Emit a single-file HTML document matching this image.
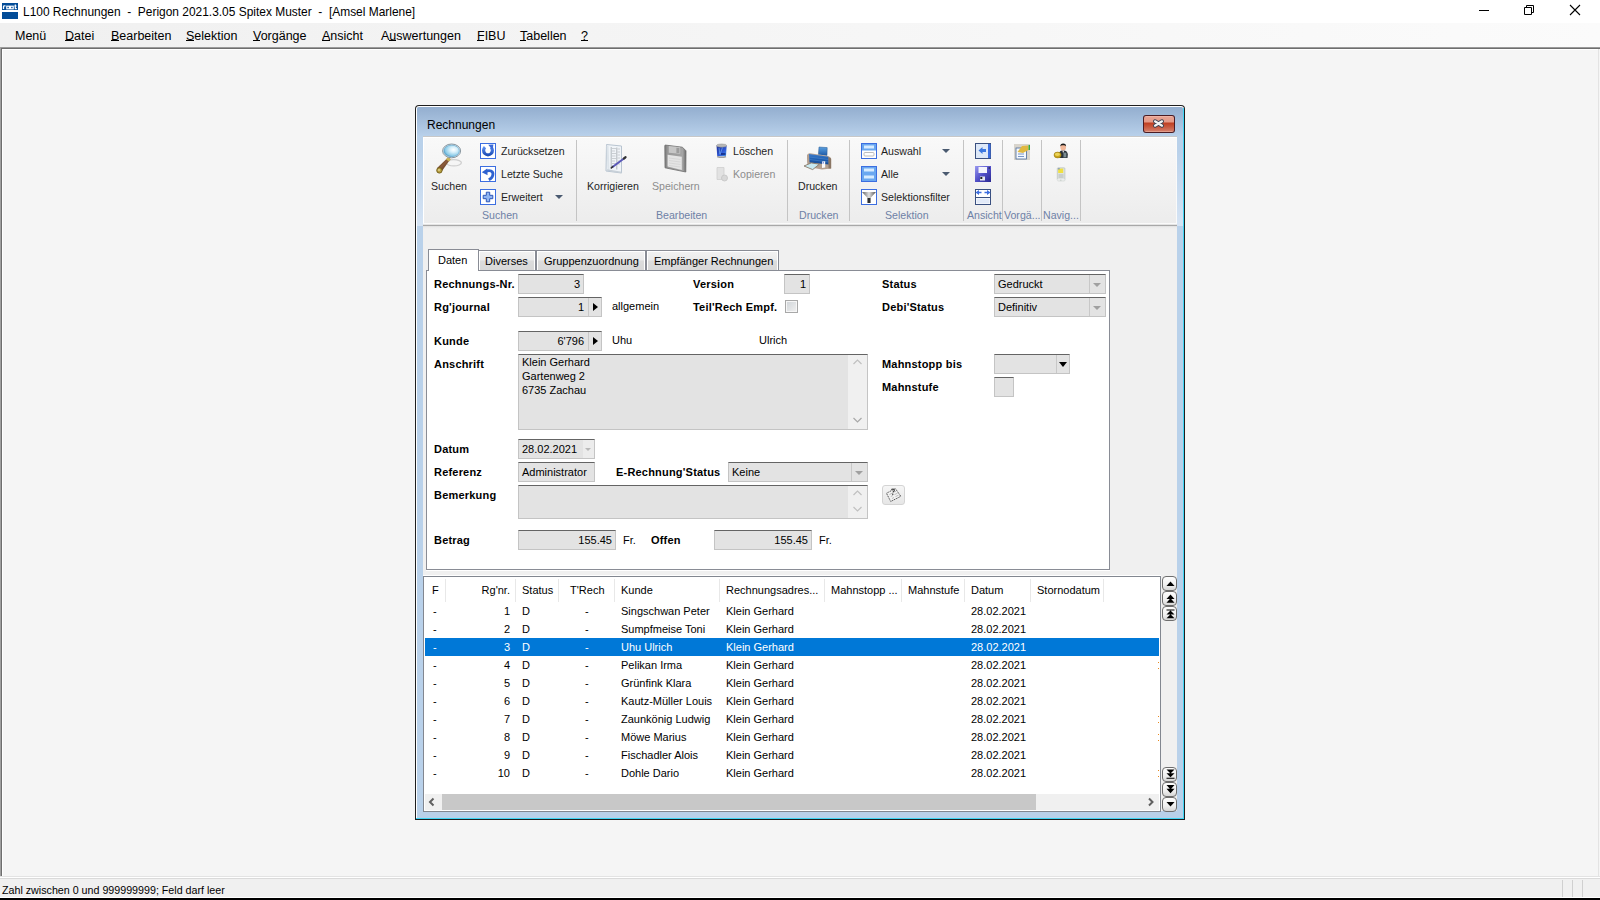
<!DOCTYPE html>
<html><head><meta charset="utf-8">
<style>
*{margin:0;padding:0;box-sizing:border-box}
html,body{width:1600px;height:900px;overflow:hidden;background:#f5f5f5;font-family:"Liberation Sans",sans-serif;color:#000}
.a{position:absolute}
.t{position:absolute;white-space:pre;font-size:11px;line-height:12px}
.m{position:absolute;white-space:pre;font-size:12.5px;line-height:14px}
.b{font-weight:bold}
u{text-decoration:none;border-bottom:1px solid #000}
.inp{position:absolute;background:#e1e1e1;border:1px solid #a9a9a9;border-top-color:#646464}
.sel{background:#0078d7;color:#fff}
</style></head><body>
<!-- title bar -->
<div class="a" style="left:0;top:0;width:1600px;height:23px;background:#fff"></div>
<svg class="a" style="left:0;top:0" width="22" height="22" viewBox="0 0 22 22"><rect x="2" y="3" width="16" height="7" fill="#034c98"/><rect x="2" y="12" width="16" height="7" fill="#034c98"/>
<path d="M3.5 9 V6.5 Q3.5 5.8 4.5 5.8 H5.5" fill="none" stroke="#fff" stroke-width="1.3"/><rect x="6.8" y="6.2" width="2.6" height="2.6" fill="none" stroke="#fff" stroke-width="1.2"/><rect x="10.6" y="6.2" width="2.6" height="2.6" fill="none" stroke="#fff" stroke-width="1.2"/><path d="M15.3 4.6 V8.6 H16.8 M14.3 6 H16.6" fill="none" stroke="#fff" stroke-width="1.2"/></svg>
<div class="a" style="left:1479px;top:10px;width:10px;height:1px;background:#000"></div>
<svg class="a" style="left:1520px;top:0" width="20" height="20" viewBox="0 0 20 20"><path d="M4.5 7.5 H11.5 V14.5 H4.5 Z" fill="none" stroke="#000" stroke-width="1"/><path d="M6.5 7 V5.5 H13.5 V12.5 H12" fill="none" stroke="#000" stroke-width="1"/></svg>
<svg class="a" style="left:1565px;top:0" width="20" height="20" viewBox="0 0 20 20"><path d="M5 5 L15 15 M15 5 L5 15" stroke="#000" stroke-width="1.1"/></svg>
<div class="m" style="left:23px;top:5px;font-size:11.95px">L100 Rechnungen  -  Perigon 2021.3.05 Spitex Muster  -  [Amsel Marlene]</div>
<!-- menu bar -->
<div class="a" style="left:0;top:23px;width:1600px;height:24px;background:linear-gradient(to right,#f0f0f0,#fbfbfb)"></div>
<div class="m" style="left:15px;top:29px">Menü</div>
<div class="m" style="left:65px;top:29px">Datei</div>
<div class="m" style="left:111px;top:29px">Bearbeiten</div>
<div class="m" style="left:186px;top:29px">Selektion</div>
<div class="m" style="left:253px;top:29px">Vorgänge</div>
<div class="m" style="left:322px;top:29px">Ansicht</div>
<div class="m" style="left:381px;top:29px">Auswertungen</div>
<div class="m" style="left:477px;top:29px">FIBU</div>
<div class="m" style="left:520px;top:29px">Tabellen</div>
<div class="m" style="left:581px;top:29px">?</div>
<div class="a" style="left:65px;top:40px;width:9px;height:1px;background:#000"></div>
<div class="a" style="left:111px;top:40px;width:8px;height:1px;background:#000"></div>
<div class="a" style="left:186px;top:40px;width:8px;height:1px;background:#000"></div>
<div class="a" style="left:253px;top:40px;width:7px;height:1px;background:#000"></div>
<div class="a" style="left:322px;top:40px;width:8px;height:1px;background:#000"></div>
<div class="a" style="left:389px;top:40px;width:7px;height:1px;background:#000"></div>
<div class="a" style="left:477px;top:40px;width:7px;height:1px;background:#000"></div>
<div class="a" style="left:520px;top:40px;width:6px;height:1px;background:#000"></div>
<div class="a" style="left:581px;top:40px;width:7px;height:1px;background:#000"></div>
<!-- MDI frame -->
<div class="a" style="left:0;top:47px;width:1600px;height:1px;background:#9a9a9a"></div>
<div class="a" style="left:1px;top:48px;width:1599px;height:1px;background:#6e6e6e"></div>
<div class="a" style="left:0;top:47px;width:1px;height:830px;background:#a0a0a0"></div>
<div class="a" style="left:1px;top:48px;width:1px;height:828px;background:#6e6e6e"></div>
<div class="a" style="left:2px;top:49px;width:1596px;height:1px;background:#fff"></div>
<div class="a" style="left:2px;top:49px;width:1px;height:827px;background:#fff"></div>
<div class="a" style="left:1598px;top:49px;width:1px;height:828px;background:#e3e3e3"></div>
<div class="a" style="left:0;top:876px;width:1600px;height:1px;background:#e3e3e3"></div>
<div class="a" style="left:0;top:877px;width:1600px;height:1px;background:#fff"></div>
<!-- status bar -->
<div class="a" style="left:0;top:878px;width:1600px;height:19px;background:#f0f0f0;border-top:1px solid #dadada"></div>
<div class="a" style="left:0;top:897px;width:1600px;height:1px;background:#fff"></div>
<div class="a" style="left:0;top:898px;width:1600px;height:2px;background:#000"></div>
<div class="t" style="left:2px;top:884px;font-size:10.7px">Zahl zwischen 0 und 999999999; Feld darf leer</div>
<div class="a" style="left:1562px;top:880px;width:1px;height:17px;background:#d0d0d0"></div>
<div class="a" style="left:1572px;top:880px;width:1px;height:17px;background:#d0d0d0"></div>
<div class="a" style="left:1582px;top:880px;width:1px;height:17px;background:#d0d0d0"></div>


<!-- DIALOG -->
<div class="a" style="left:415px;top:105px;width:770px;height:715px;background:#1e1e1e;border-radius:4px 4px 0 0"></div>
<div class="a" style="left:416px;top:106px;width:768px;height:713px;background:#fff;border-radius:3px 3px 0 0"></div>
<div class="a" style="left:417px;top:107px;width:766px;height:711px;background:#b9d1ea;border-radius:2px 2px 0 0"></div>
<div class="a" style="left:1183px;top:108px;width:1px;height:711px;background:#3fd5f5"></div>
<div class="a" style="left:416px;top:818px;width:768px;height:1px;background:#3fd5f5"></div>
<div class="a" style="left:417px;top:107px;width:766px;height:29px;background:linear-gradient(#93aecf,#b8d0ea);border-radius:2px 2px 0 0"></div>
<div class="m" style="left:427px;top:118px;font-size:12px">Rechnungen</div>
<!-- close btn -->
<div class="a" style="left:1143px;top:115px;width:32px;height:18px;background:#4a1c24;border-radius:3px"></div>
<div class="a" style="left:1144px;top:116px;width:30px;height:16px;border-radius:2px;background:linear-gradient(#f6c4b8 0,#e8a292 1px,#e49a88 6px,#bf3f22 7px,#c85a40 11px,#d47a66 15px,#f0c0b0 16px)"></div>
<svg class="a" style="left:1152px;top:118px" width="13" height="11" viewBox="0 0 13 11"><path d="M3 3.3 L10 7.7 M10 3.3 L3 7.7" stroke="#3a4252" stroke-width="4" stroke-linecap="round"/><path d="M3 3.3 L10 7.7 M10 3.3 L3 7.7" stroke="#f4f4f4" stroke-width="2.2" stroke-linecap="round"/></svg>
<!-- ribbon -->
<div class="a" style="left:423px;top:136px;width:754px;height:1px;background:#c8c8c8"></div>
<div class="a" style="left:423px;top:137px;width:754px;height:88px;background:linear-gradient(#f9f9f9,#ececec)"></div>
<div class="a" style="left:423px;top:137px;width:1px;height:87px;background:#fff"></div>
<div class="a" style="left:1176px;top:137px;width:1px;height:87px;background:#fafafa"></div>
<div class="a" style="left:423px;top:137px;width:754px;height:1px;background:#fff"></div>
<div class="a" style="left:423px;top:223px;width:754px;height:1px;background:#fafafa"></div>
<div class="a" style="left:423px;top:224px;width:754px;height:1px;background:#e4e4e4"></div>
<div class="a" style="left:423px;top:225px;width:754px;height:1px;background:#a8a8a8"></div>
<div class="a" style="left:417px;top:150px;width:6px;height:76px;background:linear-gradient(#b9d1ea,#d6e4f4)"></div>
<div class="a" style="left:1177px;top:150px;width:6px;height:76px;background:linear-gradient(#b9d1ea,#d6e4f4)"></div>
<div class="a" style="left:423px;top:226px;width:754px;height:585px;background:linear-gradient(#dcdcdc 0,#ebebeb 1px,#f0f0f0 3px,#f0f0f0)"></div>

<style>
.r{position:absolute;white-space:pre;font-size:10.6px;line-height:12px;color:#1e1e1e}
.g{position:absolute;white-space:pre;font-size:10.6px;line-height:12px;color:#6e81a6}
.gr{color:#8d8d8d}
.sep{position:absolute;top:140px;width:1px;height:81px;background:#c4c4c4}
.ib{position:absolute;width:16px;height:16px;border:1px solid #3c6ee0;background:#fff}
.dd{position:absolute;width:0;height:0;border-left:4px solid transparent;border-right:4px solid transparent;border-top:4px solid #4a5a70}
</style>
<!-- Suchen group -->
<svg class="a" style="left:430px;top:140px" width="40" height="40" viewBox="0 0 40 40">
<defs><radialGradient id="lens" cx="0.62" cy="0.4" r="0.65"><stop offset="0" stop-color="#ffffff"/><stop offset="0.35" stop-color="#d8f0fa"/><stop offset="0.8" stop-color="#8ccbe8"/><stop offset="1" stop-color="#4f9ec8"/></radialGradient>
<linearGradient id="hdl" x1="0" y1="0" x2="1" y2="1"><stop offset="0" stop-color="#3a2010"/><stop offset="0.5" stop-color="#8a5a3a"/><stop offset="1" stop-color="#3a2010"/></linearGradient></defs>
<ellipse cx="23.8" cy="22.8" rx="7.6" ry="3.1" fill="none" stroke="#cfcfcf" stroke-width="1.3"/>
<path d="M18 17.5 L20.5 19 L12 31 L6.8 28.2 Z" fill="url(#hdl)"/>
<path d="M17.6 17.2 L20.8 19.2 L19.2 21.5 L16 19.6 Z" fill="#c9b45a"/>
<circle cx="9.4" cy="30.4" r="2.7" fill="#b8a040" stroke="#6e5a18" stroke-width="0.9"/>
<circle cx="9" cy="30" r="1" fill="#e0d090"/>
<ellipse cx="21.6" cy="10.9" rx="9" ry="6.9" fill="#e8ecee" stroke="#7a8a94" stroke-width="0.9"/>
<ellipse cx="21.6" cy="10.9" rx="7.8" ry="5.8" fill="url(#lens)" stroke="#5aa0c8" stroke-width="0.6"/>
</svg>
<div class="r" style="left:431px;top:180px">Suchen</div>
<div class="ib" style="left:480px;top:143px"></div>
<svg class="a" style="left:480px;top:143px" width="16" height="16" viewBox="0 0 16 16"><defs><linearGradient id="rf" x1="0" y1="0" x2="0" y2="1"><stop offset="0" stop-color="#5a8ef0"/><stop offset="1" stop-color="#1f4fb8"/></linearGradient></defs><path d="M5 4.2 A4.4 4.4 0 1 0 11 4.2" fill="none" stroke="url(#rf)" stroke-width="3.2"/><path d="M8.2 1.8 L13.4 1.6 L12.6 7 Z" fill="#3a6ad8"/></svg>
<div class="r" style="left:501px;top:145px">Zurücksetzen</div>
<div class="ib" style="left:480px;top:166px"></div>
<svg class="a" style="left:480px;top:166px" width="16" height="16" viewBox="0 0 16 16"><path d="M5.5 5.8 C9.5 3.2 13.8 5.2 12.8 9.2 C12.3 11.5 10.8 12.8 8.8 13.8" fill="none" stroke="#2f62d0" stroke-width="2.8"/><path d="M1.8 6.2 L7.2 2.5 L7.6 9.2 Z" fill="#2f62d0"/></svg>
<div class="r" style="left:501px;top:168px">Letzte Suche</div>
<div class="ib" style="left:480px;top:189px"></div>
<svg class="a" style="left:480px;top:189px" width="16" height="16" viewBox="0 0 16 16"><path d="M6.3 3.2 H9.7 V6.3 H12.8 V9.7 H9.7 V12.8 H6.3 V9.7 H3.2 V6.3 H6.3 Z" fill="#8fb4f2" stroke="#2d55b8" stroke-width="1"/></svg>
<div class="r" style="left:501px;top:191px">Erweitert</div>
<div class="dd" style="left:555px;top:195px"></div>
<div class="g" style="left:482px;top:209px">Suchen</div>
<div class="sep" style="left:576px"></div>
<!-- Bearbeiten group -->
<svg class="a" style="left:604px;top:142px" width="24" height="34" viewBox="0 0 24 34">
<path d="M2.5 2.5 L17.5 4 L17.5 31 L2 29 Z" fill="#f0f4f8" stroke="#b8c4d0" stroke-width="1"/>
<path d="M3.5 3.5 L4.5 28.5" stroke="#dde4ea" stroke-width="2"/><path d="M7.2 5 V27 M12.8 5.5 V27.5" stroke="#9aa0a6" stroke-width="0.7"/><path d="M8 6.5 H12 M8 9 H11 M8 11.5 H12 M8 14 H11.5 M8 16.5 H12 M8 19 H11 M8 21.5 H12 M8 24 H11 M13.5 7 H16 M13.5 10 H16 M13.5 13 H16 M13.5 16 H16 M13.5 19 H16 M13.5 22 H16" stroke="#c0c4c8" stroke-width="0.8"/><path d="M3 28 L17.5 30.5" stroke="#c8d0d8" stroke-width="1.5"/>
<path d="M8.5 25 L21 15.8" stroke="#5a58b8" stroke-width="2" stroke-linecap="round"/>
<path d="M19.8 16.6 L21.6 15.2" stroke="#333" stroke-width="2.2" stroke-linecap="round"/><path d="M7.3 25.8 L8.8 24.7" stroke="#333" stroke-width="1.6" stroke-linecap="round"/>
</svg>
<div class="r" style="left:587px;top:180px">Korrigieren</div>
<svg class="a" style="left:660px;top:140px" width="32" height="36" viewBox="0 0 32 36">
<defs><linearGradient id="fg" x1="0" y1="0" x2="1" y2="0"><stop offset="0" stop-color="#7a7a7a"/><stop offset="0.15" stop-color="#9a9a9a"/><stop offset="0.85" stop-color="#a4a4a4"/><stop offset="1" stop-color="#6a6a6a"/></linearGradient></defs>
<path d="M4.8 5.6 Q4.8 5 5.6 5.1 L22.4 7.2 L26 10.8 L25.8 32 L5 27.8 Z" fill="url(#fg)" stroke="#6e6e6e" stroke-width="0.8"/>
<path d="M8.8 6 L20.2 7.2 L20.2 13.8 L8.8 12.8 Z" fill="#c6c6c6"/>
<path d="M16.4 7.8 H19.4 V13 H16.4 Z" fill="#9c9c9c"/>
<path d="M7.6 14.8 L21.8 16.8 L21.8 30 L7.6 26.4 Z" fill="#e4e4e4"/>
<path d="M9 18 L20.5 19.5 M9 20.5 L20.5 22 M9 23 L20.5 24.5 M9 25.5 L20.5 27" stroke="#d0d0d0" stroke-width="0.7"/>
</svg>
<div class="r gr" style="left:652px;top:180px">Speichern</div>
<svg class="a" style="left:715px;top:143px" width="14" height="16" viewBox="0 0 14 16">
<defs><linearGradient id="tb" x1="0" y1="0" x2="1" y2="1"><stop offset="0" stop-color="#1c2e98"/><stop offset="0.6" stop-color="#2f5ad8"/><stop offset="1" stop-color="#4a9ae8"/></linearGradient></defs>
<path d="M1.6 3 L11.6 3 L11 13.2 L2.2 13.2 Z" fill="url(#tb)"/>
<path d="M4 5 L4.8 11 M7.5 4.5 L5 11.5" stroke="#7ab4f0" stroke-width="0.8" opacity="0.8"/>
<path d="M6 11 H10.5" stroke="#0a1a70" stroke-width="1.3"/>
<ellipse cx="6.6" cy="2.6" rx="5.2" ry="1.6" fill="#b8b8b8" stroke="#888" stroke-width="0.5"/>
<path d="M2.2 13.4 Q6.6 15.2 11 13.4" fill="none" stroke="#a0a0a0" stroke-width="1.6"/>
</svg>
<div class="r" style="left:733px;top:145px">Löschen</div>
<svg class="a" style="left:715px;top:166px" width="14" height="16" viewBox="0 0 14 16">
<path d="M2 1.5 H9 V13.5 H2 Z" fill="#e2e2e2" stroke="#cfcfcf" stroke-width="0.8"/>
<circle cx="9.5" cy="12" r="3" fill="#d8d8d8" stroke="#c4c4c4" stroke-width="0.8"/>
</svg>
<div class="r gr" style="left:733px;top:168px">Kopieren</div>
<div class="g" style="left:656px;top:209px">Bearbeiten</div>
<div class="sep" style="left:787px"></div>
<!-- Drucken -->
<svg class="a" style="left:798px;top:138px" width="42" height="40" viewBox="0 0 42 40">
<defs><linearGradient id="pb" x1="0" y1="0" x2="0" y2="1"><stop offset="0" stop-color="#5aa0e0"/><stop offset="1" stop-color="#1e5aa8"/></linearGradient>
<linearGradient id="pbody" x1="0" y1="0" x2="0" y2="1"><stop offset="0" stop-color="#3c7ccc"/><stop offset="0.5" stop-color="#1f5eb0"/><stop offset="1" stop-color="#174a90"/></linearGradient></defs>
<path d="M21 9 L29.2 9.6 L29 17.5 L20.4 16.6 Z" fill="url(#pb)" stroke="#2a5a90" stroke-width="0.5"/>
<path d="M9 17 Q10 15 12 15.2 L30 18 Q33 18.8 33.3 21 L33.3 30.5 L24 31.5 L10 29 Q8.8 26 9 17 Z" fill="#b4a090"/>
<path d="M11 16 L30.5 18.8 L30.8 26.5 L11.5 24.5 Z" fill="url(#pbody)"/>
<path d="M11.5 19 L30.5 21.5 M11.5 21.5 L30.5 24" stroke="#4a88d0" stroke-width="0.7" opacity="0.8"/>
<path d="M24 23.5 L27.2 23.2 L27.2 29.5 L24 30 Z" fill="#fafafa"/>
<path d="M24.5 25 L26 24.8" stroke="#3050d0" stroke-width="0.9"/>
<path d="M30.5 19 L33 20.5 L33 30.5 L30.5 30.5 Z" fill="#8a7664"/>
<path d="M6 28 L13.3 24.9 L21.3 26.2 L14.7 31.6 Z" fill="#c8eaf2" stroke="#8a7a6a" stroke-width="0.9"/>
</svg>
<div class="r" style="left:798px;top:180px">Drucken</div>
<div class="g" style="left:799px;top:209px">Drucken</div>
<div class="sep" style="left:849px"></div>
<!-- Selektion -->
<div class="ib" style="left:861px;top:143px"></div>
<svg class="a" style="left:861px;top:143px" width="16" height="16" viewBox="0 0 16 16"><rect x="1" y="1" width="14" height="6.5" fill="#6aa8f0"/><rect x="3" y="2.5" width="10" height="3" fill="#d8ecff"/><rect x="3" y="9.5" width="10" height="3.5" rx="1" fill="none" stroke="#bdbdbd" stroke-width="1"/></svg>
<div class="r" style="left:881px;top:145px">Auswahl</div>
<div class="dd" style="left:942px;top:149px"></div>
<div class="ib" style="left:861px;top:166px"></div>
<svg class="a" style="left:861px;top:166px" width="16" height="16" viewBox="0 0 16 16"><rect x="1" y="1" width="14" height="14" fill="#6aa8f0"/><rect x="3" y="2.5" width="10" height="3" fill="#d8ecff"/><rect x="3" y="9.5" width="10" height="3" fill="#d8ecff"/></svg>
<div class="r" style="left:881px;top:168px">Alle</div>
<div class="dd" style="left:942px;top:172px"></div>
<div class="ib" style="left:861px;top:189px"></div>
<svg class="a" style="left:861px;top:189px" width="16" height="16" viewBox="0 0 16 16"><defs><linearGradient id="fun" x1="0" y1="0" x2="1" y2="0"><stop offset="0" stop-color="#606060"/><stop offset="0.5" stop-color="#e0e0e0"/><stop offset="1" stop-color="#505050"/></linearGradient></defs><path d="M1 3 H15 L9.5 9 V14 H6.5 V9 Z" fill="url(#fun)"/><path d="M6.5 9 V14 H9.5 V9" fill="#303030"/></svg>
<div class="r" style="left:881px;top:191px">Selektionsfilter</div>
<div class="g" style="left:885px;top:209px">Selektion</div>
<div class="sep" style="left:963px"></div>
<!-- Ansicht -->
<svg class="a" style="left:975px;top:143px" width="16" height="16" viewBox="0 0 16 16"><rect x="0.5" y="0.5" width="15" height="15" fill="#dde8f8" stroke="#3a5080" stroke-width="1"/><rect x="13" y="1" width="2.5" height="14" fill="#3c6ee0"/><path d="M3.5 7.5 L7.5 4 V6 H11 V9 H7.5 V11 Z" fill="#3c78e0"/></svg>
<svg class="a" style="left:975px;top:166px" width="16" height="16" viewBox="0 0 16 16"><defs><linearGradient id="fl" x1="0" y1="0" x2="1" y2="1"><stop offset="0" stop-color="#9a9af0"/><stop offset="0.5" stop-color="#5250c8"/><stop offset="1" stop-color="#2a2890"/></linearGradient></defs><rect x="0" y="0" width="16" height="16" fill="url(#fl)"/><rect x="3.5" y="1" width="8.5" height="6" fill="#f4f4fc"/><rect x="5" y="10.5" width="5" height="4" fill="#e8e8f0"/><rect x="5.3" y="11" width="2" height="2" fill="#222"/><rect x="13.5" y="1.5" width="1.5" height="1" fill="#222"/></svg>
<svg class="a" style="left:975px;top:189px" width="16" height="16" viewBox="0 0 16 16"><rect x="0.5" y="0.5" width="15" height="15" fill="#fff" stroke="#3a5080" stroke-width="1"/><path d="M0.5 8.5 H15.5" stroke="#3a5080"/><path d="M0.5 3.5 L4 1 V6 Z M15.5 3.5 L12 1 V6 Z" fill="#3c6ee0"/><path d="M3 3.5 H6.5 M9.5 3.5 H13" stroke="#3c6ee0" stroke-width="1.5"/><rect x="1.5" y="9.5" width="13" height="5" fill="#e2eaf8"/></svg>
<div class="g" style="left:967px;top:209px">Ansicht</div>
<div class="sep" style="left:1002px"></div>
<!-- Vorgae -->
<svg class="a" style="left:1014px;top:144px" width="16" height="16" viewBox="0 0 16 16"><rect x="0" y="0" width="16" height="16" fill="#d8d4cc"/><rect x="2" y="4" width="10.5" height="11" fill="#f4f8ff" stroke="#4a6a9a" stroke-width="0.8"/><path d="M4 10 H10 M4 12.5 H10" stroke="#6a8ac0" stroke-width="0.9"/><path d="M3.5 8 L8 2 L14 1.5 L14.5 6 L9 9 Z" fill="#e0b840"/><rect x="14.5" y="1" width="1.5" height="5" fill="#3aaa3a"/></svg>
<div class="g" style="left:1004px;top:209px">Vorgä...</div>
<div class="sep" style="left:1041px"></div>
<!-- Navig -->
<svg class="a" style="left:1052px;top:142px" width="18" height="18" viewBox="0 0 18 18">
<path d="M7 12 Q7.5 8.5 10 8.5 L12.5 8.5 Q15.5 9 15.8 12.5 L15.5 16 H7.5 Z" fill="#2a3038"/>
<path d="M10.5 9 L11.3 12 L12 9 Z" fill="#e8e8e8"/>
<rect x="11.3" y="10.5" width="3.2" height="5" rx="0.6" fill="#7a8a90" stroke="#3a4a50" stroke-width="0.5"/>
<ellipse cx="11.2" cy="5.2" rx="2.8" ry="3.2" fill="#f2b89a"/>
<path d="M8.3 4.6 Q8.2 1.6 11.2 1.6 Q14.2 1.6 14.1 4.6 Q13.5 3 11.2 3.2 Q9 3 8.3 4.6 Z" fill="#1a1a1a"/>
<ellipse cx="5.6" cy="13" rx="3.6" ry="2.9" fill="#c8a418" stroke="#8a6a08" stroke-width="0.5"/>
<ellipse cx="5.4" cy="12.3" rx="2.6" ry="1.6" fill="#ecd45a"/>
</svg>
<svg class="a" style="left:1056px;top:167px" width="10" height="15" viewBox="0 0 10 15">
<rect x="1.3" y="0.8" width="7.6" height="13" rx="0.8" fill="#dfe3e0" stroke="#b0b8b4" stroke-width="0.6"/>
<rect x="2.2" y="1.6" width="5" height="4.4" fill="#f0e040"/>
<rect x="2.2" y="1.4" width="1.4" height="0.9" fill="#3a6ad0"/>
<path d="M2.5 8 H7.5 M2.5 10 H7.5" stroke="#a8b0ac" stroke-width="0.8"/>
<path d="M1 13 H4 M5.5 13 H8.8" stroke="#f8f8f8" stroke-width="1.2"/>
</svg>
<div class="g" style="left:1043px;top:209px">Navig...</div>
<div class="sep" style="left:1080px"></div>


<style>
.f{position:absolute;white-space:pre;font-size:11px;line-height:12px;color:#000}
.fb{position:absolute;white-space:pre;font-size:11px;line-height:12px;font-weight:bold;letter-spacing:0.2px;color:#000}
.in{position:absolute;background:#e3e3e3;border:1px solid #c4c4c4;border-top-color:#646464}
.vs{position:absolute;width:1px;background:#c8c8c8}
.tri{position:absolute;width:0;height:0;border-top:4px solid transparent;border-bottom:4px solid transparent;border-left:5px solid #000}
.ddg{position:absolute;width:0;height:0;border-left:4px solid transparent;border-right:4px solid transparent;border-top:4px solid #a0a0a0}
.tab{position:absolute;top:250px;height:21px;border:1px solid #898c95;border-bottom:none;background:linear-gradient(#f2f2f2 0,#ebebeb 9px,#dcdcdc 10px,#d8d8d8 20px);box-shadow:inset 1px 1px 0 #fff,inset -1px 0 0 #fff}
</style>
<!-- tabs -->
<div class="tab" style="left:478px;width:58px"></div>
<div class="tab" style="left:536px;width:110px"></div>
<div class="tab" style="left:646px;width:133px"></div>
<div class="a" style="left:426px;top:270px;width:684px;height:300px;background:#fff;border:1px solid #898c95"></div>
<div class="a" style="left:428px;top:249px;width:51px;height:22px;background:#fff;border:1px solid #898c95;border-bottom:none"></div>
<div class="f" style="left:438px;top:254px">Daten</div>
<div class="f" style="left:485px;top:255px">Diverses</div>
<div class="f" style="left:544px;top:255px">Gruppenzuordnung</div>
<div class="f" style="left:654px;top:255px">Empfänger Rechnungen</div>
<!-- row 1 -->
<div class="fb" style="left:434px;top:278px">Rechnungs-Nr.</div>
<div class="in" style="left:518px;top:274px;width:66px;height:20px"></div>
<div class="f" style="left:518px;top:278px;width:62px;text-align:right">3</div>
<div class="fb" style="left:693px;top:278px">Version</div>
<div class="in" style="left:784px;top:274px;width:26px;height:20px"></div>
<div class="f" style="left:784px;top:278px;width:22px;text-align:right">1</div>
<div class="fb" style="left:882px;top:278px">Status</div>
<div class="in" style="left:994px;top:274px;width:112px;height:20px"></div>
<div class="vs" style="left:1089px;top:275px;height:18px"></div>
<div class="ddg" style="left:1093px;top:283px"></div>
<div class="f" style="left:998px;top:278px">Gedruckt</div>
<!-- row 2 -->
<div class="fb" style="left:434px;top:301px">Rg'journal</div>
<div class="in" style="left:518px;top:297px;width:84px;height:20px"></div>
<div class="vs" style="left:588px;top:298px;height:18px"></div>
<div class="tri" style="left:593px;top:303px"></div>
<div class="f" style="left:518px;top:301px;width:66px;text-align:right">1</div>
<div class="f" style="left:612px;top:300px">allgemein</div>
<div class="fb" style="left:693px;top:301px">Teil'Rech Empf.</div>
<div class="a" style="left:785px;top:300px;width:13px;height:13px;border:1px solid #a8a8a8;background:#f6f6f6"></div><div class="a" style="left:787px;top:302px;width:9px;height:9px;background:linear-gradient(135deg,#d2d6da,#eeeeee)"></div>
<div class="fb" style="left:882px;top:301px">Debi'Status</div>
<div class="in" style="left:994px;top:297px;width:112px;height:20px"></div>
<div class="vs" style="left:1089px;top:298px;height:18px"></div>
<div class="ddg" style="left:1093px;top:306px"></div>
<div class="f" style="left:998px;top:301px">Definitiv</div>
<!-- row 3 -->
<div class="fb" style="left:434px;top:335px">Kunde</div>
<div class="in" style="left:518px;top:331px;width:84px;height:20px"></div>
<div class="vs" style="left:588px;top:332px;height:18px"></div>
<div class="tri" style="left:593px;top:337px"></div>
<div class="f" style="left:518px;top:335px;width:66px;text-align:right">6'796</div>
<div class="f" style="left:612px;top:334px">Uhu</div>
<div class="f" style="left:759px;top:334px">Ulrich</div>
<!-- row 4 -->
<div class="fb" style="left:434px;top:358px">Anschrift</div>
<div class="in" style="left:518px;top:354px;width:350px;height:76px"></div>
<div class="a" style="left:848px;top:355px;width:19px;height:74px;background:#f0f0f0"></div>
<svg class="a" style="left:852px;top:358px" width="11" height="8" viewBox="0 0 11 8"><path d="M1.5 6 L5.5 2 L9.5 6" fill="none" stroke="#c0c0c0" stroke-width="1.2"/></svg>
<svg class="a" style="left:852px;top:416px" width="11" height="8" viewBox="0 0 11 8"><path d="M1.5 2 L5.5 6 L9.5 2" fill="none" stroke="#a8a8a8" stroke-width="1.2"/></svg>
<div class="f" style="left:522px;top:356px">Klein Gerhard</div>
<div class="f" style="left:522px;top:370px">Gartenweg 2</div>
<div class="f" style="left:522px;top:384px">6735 Zachau</div>
<div class="fb" style="left:882px;top:358px">Mahnstopp bis</div>
<div class="in" style="left:994px;top:354px;width:76px;height:20px"></div>
<div class="vs" style="left:1056px;top:355px;height:18px"></div>
<div class="a" style="left:1059px;top:362px;width:0;height:0;border-left:4px solid transparent;border-right:4px solid transparent;border-top:5px solid #000"></div>
<div class="fb" style="left:882px;top:381px">Mahnstufe</div>
<div class="in" style="left:994px;top:377px;width:20px;height:20px"></div>
<!-- row 5 -->
<div class="fb" style="left:434px;top:443px">Datum</div>
<div class="in" style="left:518px;top:439px;width:77px;height:20px"></div>
<div class="a" style="left:583px;top:440px;width:11px;height:18px;background:#ececec"></div>
<div class="ddg" style="left:585px;top:448px;border-top-color:#b8b8b8;border-left-width:3.5px;border-right-width:3.5px;border-top-width:3.5px"></div>
<div class="f" style="left:522px;top:443px">28.02.2021</div>
<!-- row 6 -->
<div class="fb" style="left:434px;top:466px">Referenz</div>
<div class="in" style="left:518px;top:462px;width:77px;height:20px"></div>
<div class="f" style="left:522px;top:466px">Administrator</div>
<div class="fb" style="left:616px;top:466px">E-Rechnung'Status</div>
<div class="in" style="left:728px;top:462px;width:140px;height:20px"></div>
<div class="vs" style="left:851px;top:463px;height:18px"></div>
<div class="ddg" style="left:855px;top:471px"></div>
<div class="f" style="left:732px;top:466px">Keine</div>
<!-- row 7 -->
<div class="fb" style="left:434px;top:489px">Bemerkung</div>
<div class="in" style="left:518px;top:485px;width:350px;height:34px"></div>
<div class="a" style="left:848px;top:486px;width:19px;height:32px;background:#f0f0f0"></div>
<svg class="a" style="left:852px;top:489px" width="11" height="8" viewBox="0 0 11 8"><path d="M1.5 6 L5.5 2 L9.5 6" fill="none" stroke="#c0c0c0" stroke-width="1.2"/></svg>
<svg class="a" style="left:852px;top:505px" width="11" height="8" viewBox="0 0 11 8"><path d="M1.5 2 L5.5 6 L9.5 2" fill="none" stroke="#c0c0c0" stroke-width="1.2"/></svg>
<div class="a" style="left:882px;top:485px;width:23px;height:20px;border:1px solid #d4d4d4;border-radius:3px;background:linear-gradient(#f6f6f6,#e6e6e6)"></div>
<svg class="a" style="left:885px;top:487px" width="17" height="16" viewBox="0 0 17 16"><path d="M1.5 6.3 L10.3 1.5 L15.8 9.3 L5.7 14.5 Z" fill="#f2f2f2" stroke="#555" stroke-width="1" stroke-dasharray="1.3 0.7"/><path d="M4.5 7.5 L8 5.8 M9.5 5 L11 4.3 M5.8 9.5 L8 8.4 M9.5 7.6 L12.5 6.2 M7 11.5 L9 10.5 M10.5 9.6 L13.5 8.2" stroke="#b0b0b0" stroke-width="0.8"/><path d="M6.3 2.6 Q8.5 1.2 9.3 3 Q9.6 4.2 7.8 5.2" fill="none" stroke="#333" stroke-width="1.2"/><circle cx="7.8" cy="7.3" r="0.7" fill="#333"/></svg>
<!-- row 8 -->
<div class="fb" style="left:434px;top:534px">Betrag</div>
<div class="in" style="left:518px;top:530px;width:98px;height:20px"></div>
<div class="f" style="left:518px;top:534px;width:94px;text-align:right">155.45</div>
<div class="f" style="left:623px;top:534px">Fr.</div>
<div class="fb" style="left:651px;top:534px">Offen</div>
<div class="in" style="left:714px;top:530px;width:98px;height:20px"></div>
<div class="f" style="left:714px;top:534px;width:94px;text-align:right">155.45</div>
<div class="f" style="left:819px;top:534px">Fr.</div>


<style>
.gt{position:absolute;white-space:pre;font-size:11px;line-height:12px;color:#000}
.hs{position:absolute;top:579px;width:1px;height:23px;background:#e8e8e8}
.sb{position:absolute;left:1162px;width:15px;height:15px;border:1px solid #6e6e6e;border-radius:4px;background:linear-gradient(#fdfdfd 0,#f0f0f0 60%,#d6d6d6 100%)}
</style>
<div class="a" style="left:423px;top:576px;width:738px;height:236px;background:#fff;border:1px solid #828790"></div>
<div class="hs" style="left:445px"></div>
<div class="hs" style="left:515px"></div>
<div class="hs" style="left:558px"></div>
<div class="hs" style="left:614px"></div>
<div class="hs" style="left:719px"></div>
<div class="hs" style="left:824px"></div>
<div class="hs" style="left:901px"></div>
<div class="hs" style="left:964px"></div>
<div class="hs" style="left:1030px"></div>
<div class="hs" style="left:1103px"></div>
<div class="gt" style="left:432px;top:584px">F</div>
<div class="gt" style="left:570px;top:584px">T'Rech</div>
<div class="gt" style="left:522px;top:584px">Status</div>
<div class="gt" style="left:621px;top:584px">Kunde</div>
<div class="gt" style="left:726px;top:584px">Rechnungsadres...</div>
<div class="gt" style="left:831px;top:584px">Mahnstopp ...</div>
<div class="gt" style="left:908px;top:584px">Mahnstufe</div>
<div class="gt" style="left:971px;top:584px">Datum</div>
<div class="gt" style="left:1037px;top:584px">Stornodatum</div>
<div class="gt" style="left:446px;top:584px;width:64px;text-align:right">Rg'nr.</div>
<div class="gt" style="left:433px;top:605px">-</div>
<div class="gt" style="left:446px;top:605px;width:64px;text-align:right">1</div>
<div class="gt" style="left:522px;top:605px">D</div>
<div class="gt" style="left:585px;top:605px">-</div>
<div class="gt" style="left:621px;top:605px">Singschwan Peter</div>
<div class="gt" style="left:726px;top:605px">Klein Gerhard</div>
<div class="gt" style="left:971px;top:605px">28.02.2021</div>
<div class="gt" style="left:433px;top:623px">-</div>
<div class="gt" style="left:446px;top:623px;width:64px;text-align:right">2</div>
<div class="gt" style="left:522px;top:623px">D</div>
<div class="gt" style="left:585px;top:623px">-</div>
<div class="gt" style="left:621px;top:623px">Sumpfmeise Toni</div>
<div class="gt" style="left:726px;top:623px">Klein Gerhard</div>
<div class="gt" style="left:971px;top:623px">28.02.2021</div>
<div class="a" style="left:425px;top:638px;width:734px;height:18px;background:#0078d7"></div>
<div class="gt" style="color:#fff;left:433px;top:641px">-</div>
<div class="gt" style="color:#fff;left:446px;top:641px;width:64px;text-align:right">3</div>
<div class="gt" style="color:#fff;left:522px;top:641px">D</div>
<div class="gt" style="color:#fff;left:585px;top:641px">-</div>
<div class="gt" style="color:#fff;left:621px;top:641px">Uhu Ulrich</div>
<div class="gt" style="color:#fff;left:726px;top:641px">Klein Gerhard</div>
<div class="gt" style="color:#fff;left:971px;top:641px">28.02.2021</div>
<div class="gt" style="left:433px;top:659px">-</div>
<div class="gt" style="left:446px;top:659px;width:64px;text-align:right">4</div>
<div class="gt" style="left:522px;top:659px">D</div>
<div class="gt" style="left:585px;top:659px">-</div>
<div class="gt" style="left:621px;top:659px">Pelikan Irma</div>
<div class="gt" style="left:726px;top:659px">Klein Gerhard</div>
<div class="gt" style="left:971px;top:659px">28.02.2021</div>
<div class="gt" style="left:433px;top:677px">-</div>
<div class="gt" style="left:446px;top:677px;width:64px;text-align:right">5</div>
<div class="gt" style="left:522px;top:677px">D</div>
<div class="gt" style="left:585px;top:677px">-</div>
<div class="gt" style="left:621px;top:677px">Grünfink Klara</div>
<div class="gt" style="left:726px;top:677px">Klein Gerhard</div>
<div class="gt" style="left:971px;top:677px">28.02.2021</div>
<div class="gt" style="left:433px;top:695px">-</div>
<div class="gt" style="left:446px;top:695px;width:64px;text-align:right">6</div>
<div class="gt" style="left:522px;top:695px">D</div>
<div class="gt" style="left:585px;top:695px">-</div>
<div class="gt" style="left:621px;top:695px">Kautz-Müller Louis</div>
<div class="gt" style="left:726px;top:695px">Klein Gerhard</div>
<div class="gt" style="left:971px;top:695px">28.02.2021</div>
<div class="gt" style="left:433px;top:713px">-</div>
<div class="gt" style="left:446px;top:713px;width:64px;text-align:right">7</div>
<div class="gt" style="left:522px;top:713px">D</div>
<div class="gt" style="left:585px;top:713px">-</div>
<div class="gt" style="left:621px;top:713px">Zaunkönig Ludwig</div>
<div class="gt" style="left:726px;top:713px">Klein Gerhard</div>
<div class="gt" style="left:971px;top:713px">28.02.2021</div>
<div class="gt" style="left:433px;top:731px">-</div>
<div class="gt" style="left:446px;top:731px;width:64px;text-align:right">8</div>
<div class="gt" style="left:522px;top:731px">D</div>
<div class="gt" style="left:585px;top:731px">-</div>
<div class="gt" style="left:621px;top:731px">Möwe Marius</div>
<div class="gt" style="left:726px;top:731px">Klein Gerhard</div>
<div class="gt" style="left:971px;top:731px">28.02.2021</div>
<div class="gt" style="left:433px;top:749px">-</div>
<div class="gt" style="left:446px;top:749px;width:64px;text-align:right">9</div>
<div class="gt" style="left:522px;top:749px">D</div>
<div class="gt" style="left:585px;top:749px">-</div>
<div class="gt" style="left:621px;top:749px">Fischadler Alois</div>
<div class="gt" style="left:726px;top:749px">Klein Gerhard</div>
<div class="gt" style="left:971px;top:749px">28.02.2021</div>
<div class="gt" style="left:433px;top:767px">-</div>
<div class="gt" style="left:446px;top:767px;width:64px;text-align:right">10</div>
<div class="gt" style="left:522px;top:767px">D</div>
<div class="gt" style="left:585px;top:767px">-</div>
<div class="gt" style="left:621px;top:767px">Dohle Dario</div>
<div class="gt" style="left:726px;top:767px">Klein Gerhard</div>
<div class="gt" style="left:971px;top:767px">28.02.2021</div>

<div class="a" style="left:1158px;top:662px;width:1px;height:1px;background:#e88a20"></div>
<div class="a" style="left:1158px;top:668px;width:1px;height:1px;background:#e88a20"></div>
<div class="a" style="left:1158px;top:716px;width:1px;height:1px;background:#e88a20"></div>
<div class="a" style="left:1158px;top:722px;width:1px;height:1px;background:#e88a20"></div>
<div class="a" style="left:1158px;top:734px;width:1px;height:1px;background:#e88a20"></div>
<div class="a" style="left:1158px;top:740px;width:1px;height:1px;background:#e88a20"></div>
<div class="a" style="left:1158px;top:770px;width:1px;height:1px;background:#e88a20"></div>
<div class="a" style="left:1158px;top:776px;width:1px;height:1px;background:#e88a20"></div>
<!-- h scrollbar -->
<div class="a" style="left:425px;top:794px;width:734px;height:16px;background:#f0f0f0"></div>
<div class="a" style="left:442px;top:794px;width:594px;height:16px;background:#c8c8c8"></div>
<svg class="a" style="left:428px;top:797px" width="8" height="10" viewBox="0 0 8 10"><path d="M5.5 1.5 L2 5 L5.5 8.5" fill="none" stroke="#606060" stroke-width="2"/></svg>
<svg class="a" style="left:1147px;top:797px" width="8" height="10" viewBox="0 0 8 10"><path d="M2 1.5 L5.5 5 L2 8.5" fill="none" stroke="#606060" stroke-width="2"/></svg>
<!-- nav buttons -->
<div class="sb" style="top:576px"></div>
<div class="sb" style="top:591px"></div>
<div class="sb" style="top:606px"></div>
<div class="sb" style="top:767px"></div>
<div class="sb" style="top:782px"></div>
<div class="sb" style="top:797px"></div>
<svg class="a" style="left:1162px;top:576px" width="15" height="15" viewBox="0 0 15 15"><path d="M4.5 10 L8.5 5.5 L12.5 10 Z" fill="#000"/></svg>
<svg class="a" style="left:1162px;top:591px" width="15" height="15" viewBox="0 0 15 15"><path d="M4.5 8 L8.5 3.5 L12.5 8 Z M4.5 11.8 L8.5 7.3 L12.5 11.8 Z" fill="#000"/></svg>
<svg class="a" style="left:1162px;top:606px" width="15" height="15" viewBox="0 0 15 15"><path d="M4.5 3.5 H12.5 V4.5 H4.5 Z M4.5 8.5 L8.5 4.5 L12.5 8.5 Z M4.5 12.3 L8.5 8.3 L12.5 12.3 Z" fill="#000"/></svg>
<svg class="a" style="left:1162px;top:767px" width="15" height="15" viewBox="0 0 15 15"><path d="M4.5 2.5 L8.5 6.5 L12.5 2.5 Z M4.5 6.3 L8.5 10.3 L12.5 6.3 Z M4.5 10.8 H12.5 V11.8 H4.5 Z" fill="#000"/></svg>
<svg class="a" style="left:1162px;top:782px" width="15" height="15" viewBox="0 0 15 15"><path d="M4.5 3 L8.5 7.5 L12.5 3 Z M4.5 6.8 L8.5 11.3 L12.5 6.8 Z" fill="#000"/></svg>
<svg class="a" style="left:1162px;top:797px" width="15" height="15" viewBox="0 0 15 15"><path d="M4.5 5 L8.5 9.5 L12.5 5 Z" fill="#000"/></svg>
<!-- splitter -->
<div class="a" style="left:426px;top:570px;width:684px;height:1px;background:#fff"></div>
<div class="a" style="left:423px;top:575px;width:738px;height:1px;background:#fff"></div>


</body></html>
